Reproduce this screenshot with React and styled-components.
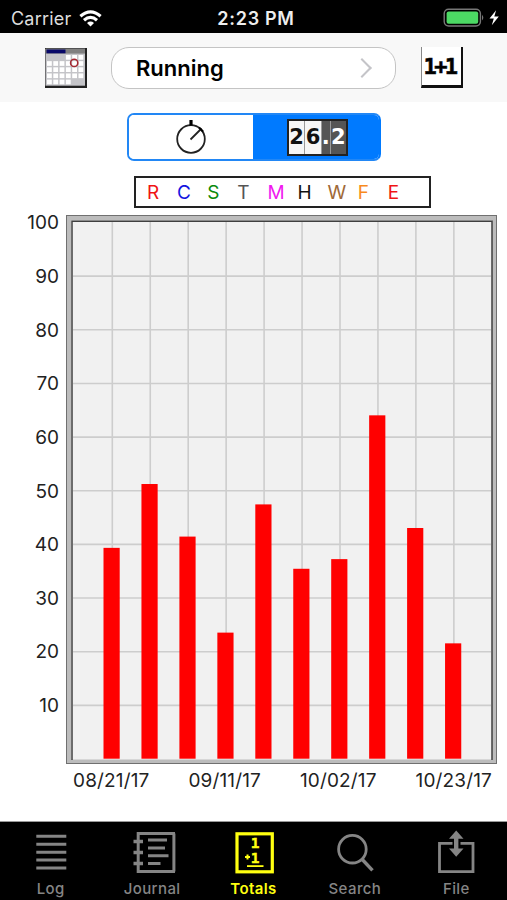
import React from 'react'
import styled, { createGlobalStyle } from 'styled-components'

const legend = [
    { letter: 'R', color: '#f01414' },
    { letter: 'C', color: '#1414e0' },
    { letter: 'S', color: '#0a8a0a' },
    { letter: 'T', color: '#555' },
    { letter: 'M', color: '#f018f0' },
    { letter: 'H', color: '#111' },
    { letter: 'W', color: '#a06a38' },
    { letter: 'F', color: '#f88a1c' },
    { letter: 'E', color: '#f01414' },
]

const weeks = [39.3, 51.2, 41.4, 23.5, 47.4, 35.4, 37.2, 64, 43, 21.5]
const ticks = [100, 90, 80, 70, 60, 50, 40, 30, 20, 10]
const dates = ['08/21/17', '09/11/17', '10/02/17', '10/23/17']

const App = () => {
    return (
        <Screen>
            <GlobalStyle />
            <StatusBar>
                <Carrier>Carrier <WifiIcon /></Carrier>
                <Clock>2:23 PM</Clock>
                <BatteryIcon />
            </StatusBar>
            <Toolbar>
                <CalendarIcon />
                <ActivityButton>
                    Running
                    <Chevron />
                </ActivityButton>
                <SumButton><span>1+1</span></SumButton>
            </Toolbar>
            <Segments>
                <Segment><StopwatchIcon /></Segment>
                <Segment $active>
                    <Odometer>
                        <Digit>2</Digit>
                        <Digit>6</Digit>
                        <Digit $dark $narrow>.</Digit>
                        <Digit $dark>2</Digit>
                    </Odometer>
                </Segment>
            </Segments>
            <Legend>
                {legend.map(item => <Letter key={item.letter} $color={item.color}>{item.letter}</Letter>)}
            </Legend>
            <ChartArea>
                <YAxis>
                    {ticks.map(tick => <YLabel key={tick}>{tick}</YLabel>)}
                </YAxis>
                <Chart />
            </ChartArea>
            <XAxis>
                {dates.map(date => <XLabel key={date}>{date}</XLabel>)}
            </XAxis>
            <TabBar>
                <Tab><LogIcon />Log</Tab>
                <Tab><JournalIcon />Journal</Tab>
                <Tab $active><TotalsIcon />Totals</Tab>
                <Tab><SearchIcon />Search</Tab>
                <Tab><FileIcon />File</Tab>
            </TabBar>
        </Screen>
    )
}

const Chart = () => (
    <svg width="431" height="549" viewBox="0 0 431 549">
        <rect x=".5" y=".5" width="430" height="548" fill="#bcbcbc" stroke="#707070" />
        <rect x="5" y="5.5" width="421" height="539" fill="#f1f1f1" />
        <path d="M6 545V6.2H426V545" fill="none" stroke="#404040" strokeWidth="1.5" />
        {ticks.slice(1).map(tick => (
            <path key={tick} d={`M7 ${544 - tick * 5.365}H425`} stroke="#cdcdcd" strokeWidth="1.6" />
        ))}
        {weeks.map((miles, i) => (
            <path key={i} d={`M${46.3 + i * 37.95} 7V543`} stroke="#cdcdcd" strokeWidth="1.6" />
        ))}
        {weeks.map((miles, i) => (
            <rect key={i} x={37.5 + i * 37.95} y={543.7 - miles * 5.365} width="16.2" height={miles * 5.365} fill="#f00" />
        ))}
    </svg>
)

const WifiIcon = () => (
    <svg width="23" height="17" viewBox="0 0 23 17" fill="none" stroke="#fff" strokeWidth="3.2">
        <path d="M1.4 6.2Q11.5-2.4 21.6 6.2M5 10.2Q11.5 4.6 18 10.2" />
        <path d="M8 12.9Q11.5 10 15 12.9L11.5 16.4Z" fill="#fff" stroke="none" />
    </svg>
)

const BatteryIcon = () => (
    <svg width="57" height="20" viewBox="0 0 57 20">
        <rect x="1.2" y="1.2" width="36.2" height="16.8" rx="4.4" fill="none" stroke="#777" strokeWidth="1.4" />
        <rect x="3.6" y="3.5" width="31.6" height="12.3" rx="2" fill="#4cd964" />
        <path d="M39 6.7Q41.7 9.6 39 12.5Z" fill="#777" />
        <path d="M53.1 2.2L46.5 10.5H50.8L48.8 17.2L55.8 8.5H51.3Z" fill="#fff" />
    </svg>
)

const CalendarIcon = () => {
    const cells = []
    for (let row = 0; row < 5; row++) {
        for (let col = 0; col < 6; col++) {
            if ((row === 0 && col < 3) || (row === 4 && col > 3)) continue
            cells.push(<rect key={row + '-' + col} x={2 + col * 6.3} y={7 + row * 6.15} width="4.8" height="4.7" fill="#fff" />)
        }
    }
    return (
        <svg width="42" height="40" viewBox="0 0 42 40">
            <path d="M0 0H42V40H0Z" fill="#222" />
            <rect x=".5" y=".7" width="39.5" height="37" fill="#c4c4c8" />
            <rect x="1" y="1" width="39" height="4.6" fill="#808080" />
            <rect x="1.5" y="1.5" width="19" height="3.8" fill="#080868" />
            {cells}
            <circle cx="29.2" cy="14.9" r="3.6" fill="none" stroke="#a42832" strokeWidth="1.6" />
        </svg>
    )
}

const StopwatchIcon = () => (
    <svg width="32" height="36" viewBox="0 0 32 36" fill="none" stroke="#222">
        <circle cx="16" cy="20" r="13.8" strokeWidth="1.8" />
        <path d="M16 1V6.5" stroke="#000" strokeWidth="3.2" />
        <path d="M15.5 20.5L26.5 9.5" strokeWidth="1.8" />
        <path d="M24 8.5L28 12.5" stroke="#000" strokeWidth="2" />
    </svg>
)

const LogIcon = () => (
    <Icon viewBox="0 0 44 44">
        <path d="M7.3 5.3H37.3M7.3 13.3H37.3M7.3 21.2H37.3M7.3 29.1H37.3M7.3 37H37.3" strokeWidth="3" />
    </Icon>
)

const JournalIcon = () => (
    <Icon viewBox="0 0 44 44">
        <path d="M8 2.5H45M8 40.5H45M43.9 2.5V40.5" strokeWidth="3" />
        <path d="M8.2 1V42" strokeWidth="3" />
        <path d="M3.5 10.5H13M3.5 21.5H13M3.5 32.5H13" strokeWidth="3.4" />
        <path d="M18 9H37M18 17H35M18 24.7H38.5M18 32.5H30.5" strokeWidth="3" />
    </Icon>
)

const TotalsIcon = () => (
    <Icon viewBox="0 0 44 44">
        <rect x="5" y="2.8" width="35.3" height="38" strokeWidth="3.2" />
        <SumText x="18.8" y="17">1</SumText>
        <SumText x="18.8" y="31.5">1</SumText>
        <path d="M13 26.1H18M15.5 23.6V28.6" strokeWidth="2" />
        <path d="M15 35.1H31.5" strokeWidth="1.8" />
    </Icon>
)

const SearchIcon = () => (
    <Icon viewBox="0 0 44 44">
        <circle cx="19.4" cy="18.2" r="13.8" strokeWidth="2.8" />
        <path d="M28.8 28L39.5 39.3" strokeWidth="3.4" />
    </Icon>
)

const FileIcon = () => (
    <Icon viewBox="0 0 44 44">
        <path d="M18.5 12.3H5.5V40.7H39V12.3H26.5" strokeWidth="2.8" />
        <path d="M22.2 6V20" strokeWidth="4.4" />
        <path d="M22.2-.5L29.5 7.8H15ZM22.2 25.7L29.5 17.5H15Z" fill="currentColor" stroke="none" />
    </Icon>
)

const GlobalStyle = createGlobalStyle`
    body {
        margin: 0;
        background: #fff;
        font-family: Inter, "Liberation Sans", sans-serif;
    }
    * {
        box-sizing: border-box;
    }
    svg {
        display: block;
        flex: none;
    }
`

const Screen = styled.div`
    width: 507px;
    height: 900px;
    overflow: hidden;
    display: flex;
    flex-direction: column;
    background: #fff;
`

const StatusBar = styled.div`
    height: 33px;
    flex: none;
    padding: 3px 7px 0 11px;
    display: grid;
    grid-template-columns: 1fr auto 1fr;
    align-items: center;
    background: #000;
    color: #fff;
    font-size: 18px;

    > svg {
        justify-self: end;
    }
`

const Carrier = styled.div`
    display: flex;
    align-items: center;
    gap: 8px;
    color: #ddd;
    letter-spacing: 0.2px;
`

const Clock = styled.div`
    font-weight: 600;
    letter-spacing: 0.7px;
    padding-left: 1px;
    color: #eee;
`

const Toolbar = styled.div`
    height: 69px;
    flex: none;
    display: flex;
    align-items: center;
    padding: 0 44px 0 45px;
    background: #f8f8f8;
`

const ActivityButton = styled.button`
    width: 285px;
    height: 42px;
    margin: 0 25px 0 24px;
    padding: 0 23px 0 24px;
    display: flex;
    align-items: center;
    justify-content: space-between;
    border: 1px solid #c4c4c4;
    border-radius: 18px;
    background: #fff;
    color: #000;
    font-family: inherit;
    font-size: 22px;
    font-weight: 600;
    letter-spacing: 0;
`

const Chevron = styled.span`
    width: 14px;
    height: 14px;
    border: solid #c4c4c8;
    border-width: 2.5px 2.5px 0 0;
    transform: rotate(45deg);
    margin-right: 3px;
`

const SumButton = styled.div`
    width: 42px;
    height: 41px;
    flex: none;
    display: flex;
    align-items: center;
    justify-content: center;
    border: solid #111;
    border-width: 0 2px 3px 1px;
    border-left-color: #888;
    background: #fff;
    font-family: "DejaVu Sans Mono", monospace;
    font-size: 22px;
    font-weight: 700;

    span {
        letter-spacing: -2.6px;
        margin: 0 0 0 -4px;
        -webkit-text-stroke: 0.6px #111;
    }
`

const Segments = styled.div`
    width: 254px;
    height: 48px;
    flex: none;
    margin: 11px 0 0 127px;
    display: flex;
    border: 2px solid #2287f5;
    border-right-color: #007aff;
    border-radius: 7px;
    overflow: hidden;
`

const Segment = styled.div`
    flex: 0 0 ${props => props.$active ? '127px' : '124px'};
    display: flex;
    align-items: center;
    justify-content: center;
    background: ${props => props.$active ? '#007aff' : '#fff'};
`

const Odometer = styled.div`
    width: 61px;
    height: 37px;
    display: flex;
    margin-left: 2px;
    gap: 1px;
    border: 2px solid #222;
    background: #999;
`

const Digit = styled.span`
    flex: ${props => props.$narrow ? '0 0 8px' : '1 1 0'};
    min-width: 0;
    display: flex;
    align-items: center;
    justify-content: center;
    background: ${props => props.$dark ? '#555' : '#f6f6f6'};
    color: ${props => props.$dark ? '#fff' : '#111'};
    font-family: "DejaVu Sans", sans-serif;
    font-size: 21px;
    font-weight: 700;
`

const Legend = styled.div`
    width: 297px;
    height: 32px;
    flex: none;
    margin: 15px 0 0 134px;
    padding-left: 11px;
    display: flex;
    align-items: center;
    border: 2px solid #222;
`

const Letter = styled.span`
    width: 30.1px;
    color: ${props => props.$color};
    font-size: 19px;
`

const ChartArea = styled.div`
    display: flex;
    flex: none;
    height: 549px;
    margin-top: 7px;
`

const YAxis = styled.div`
    width: 59px;
    margin: -19px 7px 0 0;
    display: flex;
    flex-direction: column;
`

const YLabel = styled.span`
    height: 53.65px;
    flex: none;
    display: flex;
    align-items: center;
    justify-content: flex-end;
    color: #222;
    font-size: 19px;
`

const XAxis = styled.div`
    height: 32px;
    flex: none;
    display: flex;
    justify-content: space-between;
    align-items: center;
    padding: 0 15px 0 73px;
`

const XLabel = styled.span`
    color: #222;
    font-size: 19px;
    letter-spacing: 0.15px;
`

const TabBar = styled.div`
    height: 79px;
    margin-top: auto;
    flex: none;
    display: flex;
    border-top: 1px solid #999;
    background: #000;
`

const Tab = styled.div`
    flex: 1;
    display: flex;
    flex-direction: column;
    align-items: center;
    gap: 5px;
    padding-top: 9px;
    color: ${props => props.$active ? '#ffff10' : '#858585'};
    font-size: 15px;
    line-height: 18px;
    font-weight: ${props => props.$active ? 600 : 500};
    letter-spacing: 0.4px;
`

const Icon = styled.svg`
    width: 44px;
    height: 44px;
    fill: none;
    stroke: currentColor;
    overflow: visible;
`

const SumText = styled.text`
    font-family: "DejaVu Sans Mono", monospace;
    font-size: 14.5px;
    font-weight: 700;
    fill: currentColor;
    stroke: currentColor;
    stroke-width: 0.4px;
`

export default App
